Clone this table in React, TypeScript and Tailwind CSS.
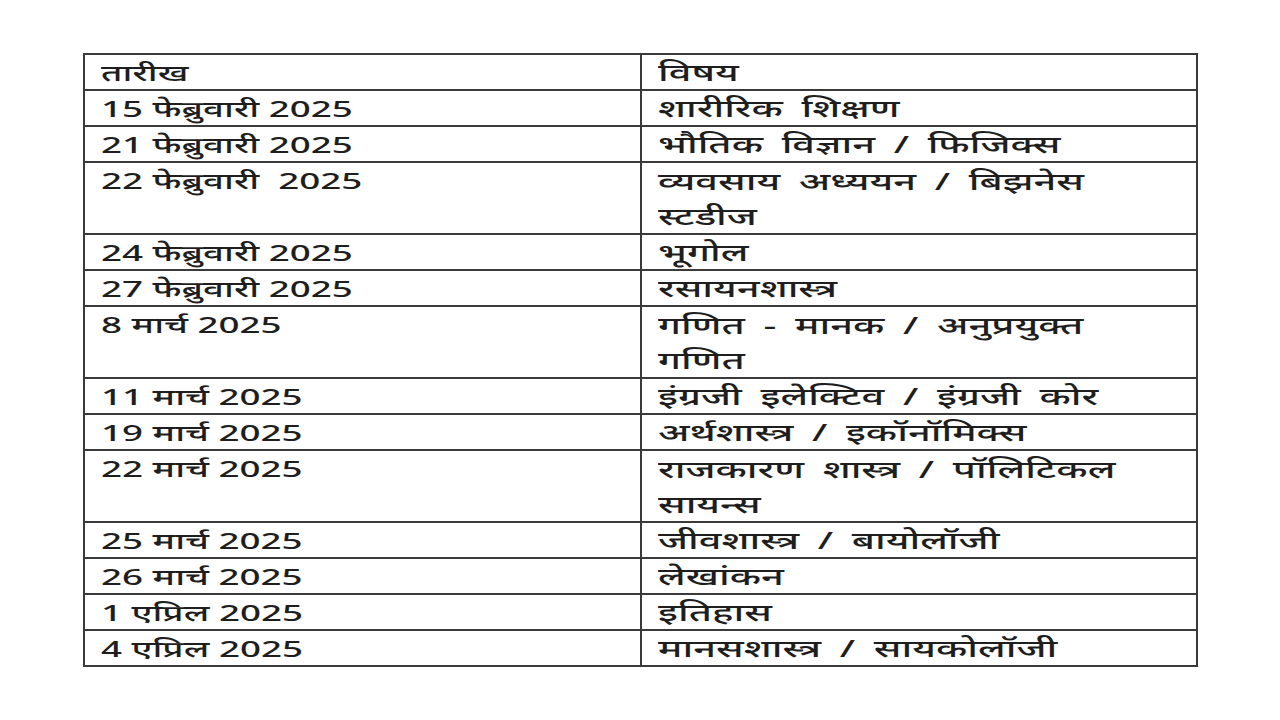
import React from 'react';

type Row = { date: string; subject: string[] };

const rows: Row[] = [
  { date: '15 फेब्रुवारी 2025', subject: ['शारीरिक शिक्षण'] },
  { date: '21 फेब्रुवारी 2025', subject: ['भौतिक विज्ञान / फिजिक्स'] },
  { date: '22 फेब्रुवारी  2025', subject: ['व्यवसाय अध्ययन / बिझनेस', 'स्टडीज'] },
  { date: '24 फेब्रुवारी 2025', subject: ['भूगोल'] },
  { date: '27 फेब्रुवारी 2025', subject: ['रसायनशास्त्र'] },
  { date: '8 मार्च 2025', subject: ['गणित - मानक / अनुप्रयुक्त', 'गणित'] },
  { date: '11 मार्च 2025', subject: ['इंग्रजी इलेक्टिव / इंग्रजी कोर'] },
  { date: '19 मार्च 2025', subject: ['अर्थशास्त्र / इकॉनॉमिक्स'] },
  { date: '22 मार्च 2025', subject: ['राजकारण शास्त्र / पॉलिटिकल', 'सायन्स'] },
  { date: '25 मार्च 2025', subject: ['जीवशास्त्र / बायोलॉजी'] },
  { date: '26 मार्च 2025', subject: ['लेखांकन'] },
  { date: '1 एप्रिल 2025', subject: ['इतिहास'] },
  { date: '4 एप्रिल 2025', subject: ['मानसशास्त्र / सायकोलॉजी'] },
];

// the source table is a horizontally stretched image, so text is widened with scale-x
const cell = 'border-2 border-[#3a3a3a] align-top pl-[16px] pr-2 h-[34px] leading-[34px]';

const DateText: React.FC<{ text: string }> = ({ text }) => (
  <span className="inline-block align-top leading-[inherit] origin-left scale-x-[1.67] whitespace-pre text-[22px]">
    {text}
  </span>
);

const SubjectText: React.FC<{ text: string }> = ({ text }) => (
  <span className="inline-block align-top leading-[inherit] origin-left scale-x-[1.66] whitespace-pre text-[24px] [word-spacing:5px]">
    {text}
  </span>
);

const App: React.FC = () => {
  return (
    <div
      className="w-[1280px] h-[720px] bg-white pt-[53px] pl-[83px] text-[#1e1e1e] font-medium"
      style={{ fontFamily: '"Noto Sans", "Noto Sans Devanagari", "Liberation Sans", sans-serif' }}
    >
      <table className="border-collapse w-[1113px] table-fixed">
        <colgroup>
          <col className="w-[557px]" />
          <col className="w-[556px]" />
        </colgroup>
        <tbody>
          <tr>
            <td className={cell}><DateText text="तारीख" /></td>
            <td className={cell}><SubjectText text="विषय" /></td>
          </tr>
          {rows.map(r => (
            <tr key={r.date}>
              <td className={cell}><DateText text={r.date} /></td>
              <td className={cell}>
                {r.subject.map((line, i) => (
                  <div key={i} className={r.subject.length > 1 ? 'h-[35px] leading-[35px]' : ''}>
                    <SubjectText text={line} />
                  </div>
                ))}
              </td>
            </tr>
          ))}
        </tbody>
      </table>
    </div>
  );
};

export default App;
